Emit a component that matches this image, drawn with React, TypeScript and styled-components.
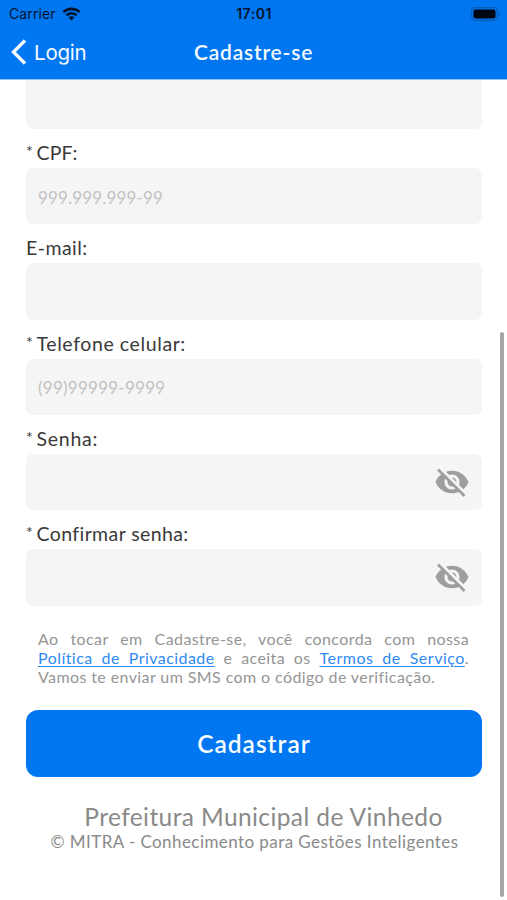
import React from "react";
import styled, { createGlobalStyle } from "styled-components";

const Global = createGlobalStyle`
  * { box-sizing: border-box; }
  html, body { margin: 0; background: #fff; overflow: hidden; }
  button { border: 0; padding: 0; background: none; cursor: pointer; }
`;

const Screen = styled.div`
  position: relative;
  width: 507px;
  height: 900px;
  overflow: hidden;
  display: flex;
  flex-direction: column;
  background: #fff;
  font-family: Lato, "Open Sans", sans-serif;
`;

const Header = styled.header`
  height: 80px;
  flex: none;
  background: #0076f0;
  border-bottom: 1px solid #8cc3fb;
`;

const StatusBar = styled.div`
  height: 27px;
  padding: 0 6px 0 9px;
  display: grid;
  grid-template-columns: 1fr auto 1fr;
  align-items: center;
  font-family: Inter, sans-serif;
  color: #03142c;
`;

const Carrier = styled.div`
  display: flex;
  align-items: center;
  gap: 6px;
  font-size: 14px;
  letter-spacing: 0.1px;
`;

const Clock = styled.div`
  margin-right: 2px;
  font-size: 14px;
  font-weight: 600;
  letter-spacing: 0.5px;
`;

const BatteryIcon = styled.svg`
  justify-self: end;
`;

const NavBar = styled.div`
  height: 50px;
  padding: 0 11px;
  display: grid;
  grid-template-columns: 1fr auto 1fr;
  align-items: center;
  color: #f3faff;
`;

const Back = styled.button`
  display: flex;
  align-items: center;
  gap: 7px;
  color: inherit;
  font: 400 20.5px/26px Inter, sans-serif;
  letter-spacing: -0.2px;
`;

const BackText = styled.span`
  padding-top: 2px;
`;

const Title = styled.h1`
  margin: 0;
  font-size: 21px;
  font-weight: 600;
  line-height: 26px;
  letter-spacing: 0.8px;
`;

const Form = styled.main`
  padding: 0 25px 0 26px;
  display: flex;
  flex-direction: column;
`;

const PartialField = styled.div`
  height: 49px;
  border-radius: 0 0 7px 7px;
  background: #f5f5f5;
`;

const Label = styled.label<{ $track: number }>`
  height: 39px;
  padding-top: 11px;
  display: flex;
  font-size: 19.5px;
  line-height: 26px;
  letter-spacing: ${(p) => p.$track}px;
  color: #3a3a3a;
`;

const Required = styled.span`
  width: 10.5px;
  font-size: 16px;
  line-height: 22px;
  letter-spacing: 0;
`;

const Field = styled.div`
  height: 56.33px;
  padding: 0 12px;
  display: flex;
  align-items: center;
  border-radius: 7px;
  background: #f5f5f5;
`;

const Input = styled.input<{ $track?: number }>`
  flex: 1;
  min-width: 0;
  height: 30px;
  padding: 2px 0 0;
  border: 0;
  outline: 0;
  background: transparent;
  font: 400 17px/24px Lato, sans-serif;
  letter-spacing: ${(p) => p.$track ?? 0}px;
  &::placeholder { color: #c2c2c2; opacity: 1; }
`;

const EyeButton = styled.button`
  display: flex;
  padding-bottom: 1px;
  color: #9e9e9e;
`;

const Legal = styled.div`
  margin: 24.6px 13px 0 12px;
  font-size: 16px;
  line-height: 18.67px;
  color: #959595;
`;

const LegalLine = styled.div<{ $justify?: boolean }>`
  white-space: nowrap;
  letter-spacing: 0.4px;
  text-align-last: ${(p) => (p.$justify ? "justify" : "left")};
`;

const Link = styled.a<{ $track: number }>`
  color: #2f8bf0;
  letter-spacing: ${(p) => p.$track}px;
  text-decoration: underline;
  text-decoration-thickness: 1px;
  text-underline-offset: 2px;
`;

const Submit = styled.button`
  height: 67px;
  margin-top: 24px;
  border-radius: 12px;
  background: #0076f0;
  color: #f8fcff;
  font: 600 24.5px/30px Lato, sans-serif;
  letter-spacing: 1px;
`;

const Footer = styled.footer`
  margin-top: 26px;
  display: flex;
  flex-direction: column;
  align-items: center;
  color: #8a8a8a;
  white-space: nowrap;
`;

const City = styled.div`
  padding-left: 19px;
  font-size: 24.5px;
  line-height: 28px;
  letter-spacing: 0.4px;
`;

const Copyright = styled.div`
  padding-left: 1px;
  font-size: 17px;
  line-height: 21px;
  letter-spacing: 0.43px;
`;

const ScrollThumb = styled.div`
  position: absolute;
  top: 332px;
  right: 3px;
  width: 4px;
  height: 565px;
  border-radius: 2px;
  background: #a6a6a6;
`;

const EyeOff = () => (
  <svg width="36" height="36" viewBox="0 0 24 24" fill="currentColor">
    <path d="M12 7c2.76 0 5 2.24 5 5 0 .65-.13 1.26-.36 1.83l2.92 2.92c1.51-1.26 2.7-2.89 3.43-4.75-1.73-4.39-6-7.5-11-7.5-1.4 0-2.74.25-3.98.7l2.16 2.16C10.74 7.13 11.35 7 12 7zM2 4.27l2.28 2.28.46.46C3.08 8.3 1.78 10.02 1 12c1.73 4.39 6 7.5 11 7.5 1.55 0 3.03-.3 4.38-.84l.42.42L19.73 22 21 20.73 3.27 3 2 4.27zM7.53 9.8l1.55 1.55c-.05.21-.08.43-.08.65 0 1.66 1.34 3 3 3 .22 0 .44-.03.65-.08l1.55 1.55c-.67.33-1.41.53-2.2.53-2.76 0-5-2.24-5-5 0-.79.2-1.53.53-2.2zm4.31-.78l3.15 3.15.02-.16c0-1.66-1.34-3-3-3l-.17.01z" />
  </svg>
);

const fields = [
  { label: "CPF:", required: true, track: 0.1, hint: "999.999.999-99", hintTrack: 0.15 },
  { label: "E-mail:", required: false, track: 0.45 },
  { label: "Telefone celular:", required: true, track: 0.6, hint: "(99)99999-9999", hintTrack: 0.25 },
  { label: "Senha:", required: true, track: 0.75, secret: true },
  { label: "Confirmar senha:", required: true, track: 0.4, secret: true },
];

export default function App() {
  return (
    <Screen>
      <Global />
      <Header>
        <StatusBar>
          <Carrier>
            Carrier
            <svg width="19" height="14" viewBox="0 0 19 14" fill="none" stroke="currentColor" strokeWidth="2.6">
              <path d="M1.4 5.2a11.5 11.5 0 0 1 16.2 0" />
              <path d="M4.4 8.3a7.2 7.2 0 0 1 10.2 0" />
              <path d="M9.5 13.6 6.5 10.6a4.3 4.3 0 0 1 6 0Z" fill="currentColor" stroke="none" />
            </svg>
          </Carrier>
          <Clock>17:01</Clock>
          <BatteryIcon width="30" height="14" viewBox="0 0 30 14">
            <rect x="0.7" y="0.7" width="25.6" height="12.6" rx="3.6" fill="none" stroke="#075bb5" strokeWidth="1.2" />
            <rect x="2.5" y="2.5" width="22" height="9" rx="2" fill="#000610" />
            <path d="M28 5v4c1.5-.6 1.5-3.4 0-4Z" fill="#075bb5" />
          </BatteryIcon>
        </StatusBar>
        <NavBar>
          <Back>
            <svg width="16" height="26" viewBox="0 0 16 26" fill="none" stroke="currentColor" strokeWidth="3.4">
              <path d="M14 1.5 2.5 13 14 24.5" />
            </svg>
            <BackText>Login</BackText>
          </Back>
          <Title>Cadastre-se</Title>
        </NavBar>
      </Header>
      <Form>
        <PartialField />
        {fields.map((f) => (
          <React.Fragment key={f.label}>
            <Label $track={f.track}>
              {f.required && <Required>*</Required>}
              {f.label}
            </Label>
            <Field>
              <Input placeholder={f.hint} $track={f.hintTrack} type={f.secret ? "password" : "text"} aria-label={f.label} />
              {f.secret && (
                <EyeButton aria-label="Mostrar senha">
                  <EyeOff />
                </EyeButton>
              )}
            </Field>
          </React.Fragment>
        ))}
        <Legal>
          <LegalLine $justify>Ao tocar em Cadastre-se, você concorda com nossa</LegalLine>
          <LegalLine $justify>
            <Link $track={0.45}>Política de Privacidade</Link> e aceita os <Link $track={0.5}>Termos de Serviço</Link>.
          </LegalLine>
          <LegalLine>Vamos te enviar um SMS com o código de verificação.</LegalLine>
        </Legal>
        <Submit>Cadastrar</Submit>
        <Footer>
          <City>Prefeitura Municipal de Vinhedo</City>
          <Copyright>© MITRA - Conhecimento para Gestões Inteligentes</Copyright>
        </Footer>
      </Form>
      <ScrollThumb />
    </Screen>
  );
}
